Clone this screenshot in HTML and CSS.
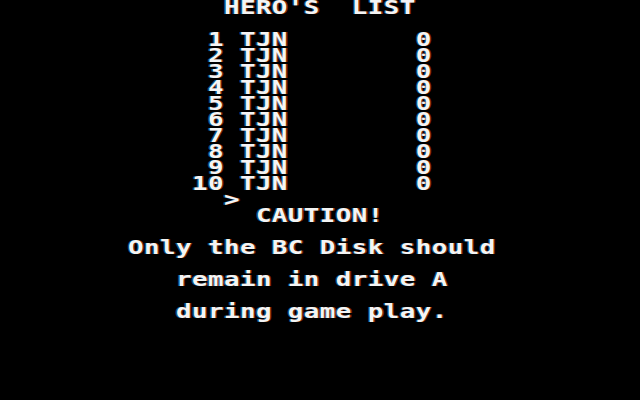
FILE: index.html
```html
<!DOCTYPE html>
<html>
<head>
<meta charset="utf-8">
<link rel="stylesheet" href="styles.css">
</head>
<body>
<pre class="screen">              HERO'S  LIST

             1 TJN        0
             2 TJN        0
             3 TJN        0
             4 TJN        0
             5 TJN        0
             6 TJN        0
             7 TJN        0
             8 TJN        0
             9 TJN        0
            10 TJN        0
              &gt;
                CAUTION!

        Only the BC Disk should

           remain in drive A

           during game play.
</pre>
</body>
</html>
```
FILE: styles.css
```css
html, body {
  margin: 0;
  padding: 0;
  background: #000;
}
body {
  width: 640px;
  height: 400px;
  overflow: hidden;
}
.screen {
  margin: 0;
  width: 492px;
  font-family: "DejaVu Sans Mono", "Liberation Mono", monospace;
  font-weight: bold;
  font-size: 19.93px;
  letter-spacing: 0.308px;
  line-height: 16px;
  color: #f4f4f4;
  white-space: pre;
  transform: scaleX(1.3);
  transform-origin: 0 0;
  text-shadow: 1px 0 rgba(255, 90, 20, 0.5), -1px 0 rgba(20, 170, 255, 0.5);
}
```
